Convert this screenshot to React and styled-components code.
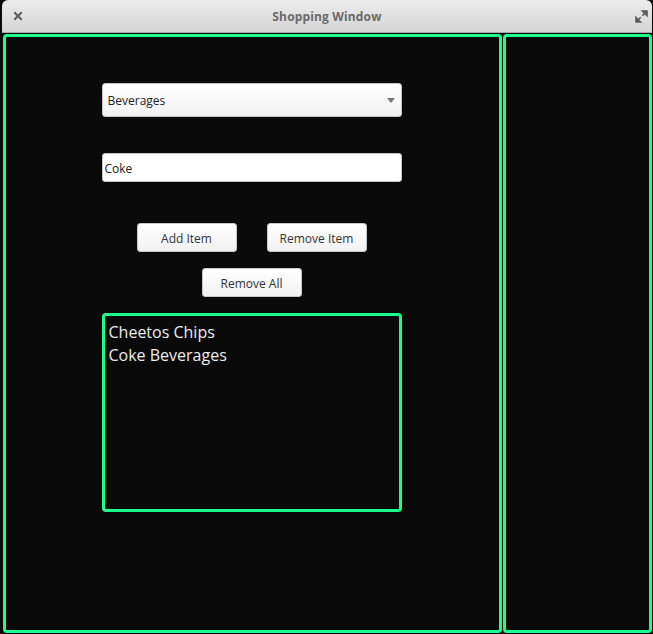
import React from 'react';
import styled, { createGlobalStyle } from 'styled-components';

const GlobalStyle = createGlobalStyle`
  html, body {
    margin: 0;
    padding: 0;
    background: #0a0a0a;
    font-family: "Open Sans", "Noto Sans", sans-serif;
  }
`;

const Window = styled.div`
  display: flex;
  flex-direction: column;
  width: 653px;
  height: 634px;
  background: #0a0a0a;
`;

const TitleBar = styled.div`
  position: relative;
  height: 32px;
  margin: 0 1px 0 2px;
  display: flex;
  align-items: center;
  justify-content: center;
  background: linear-gradient(#ececec, #d5d5d5);
  border-radius: 6px 6px 0 0;
  border-bottom: 1px solid #a8a8a8;
`;

const Title = styled.div`
  font-size: 12px;
  font-weight: 700;
  letter-spacing: 0.15px;
  color: #6a6a6a;
`;

const BarIcon = styled.div`
  position: absolute;
  top: 9px;
  ${(p) => (p.side === 'left' ? 'left: 9px;' : 'right: 4px;')}
  width: 14px;
  height: 14px;
  display: flex;
  align-items: center;
  justify-content: center;
`;

const Body = styled.div`
  flex: 1;
  display: flex;
  gap: 1px;
  padding: 1px 1px 1px 3px;
  min-height: 0;
`;

const Panel = styled.div`
  box-sizing: border-box;
  border: 3px solid #1aff8c;
  border-radius: 4px;
  ${(p) => (p.grow ? 'flex: 1;' : 'width: 149px;')}
  display: flex;
  flex-direction: column;
  align-items: center;
`;

const Form = styled.div`
  width: 300px;
  margin: 46px 2px 0 0;
  display: flex;
  flex-direction: column;
  align-items: center;
`;

const Select = styled.div`
  box-sizing: border-box;
  width: 100%;
  height: 34px;
  display: flex;
  align-items: center;
  justify-content: space-between;
  padding: 0 6px 0 5px;
  background: linear-gradient(#ffffff, #f2f2f2);
  border: 1px solid #c4c4c4;
  border-radius: 3px;
  font-size: 12px;
  color: #222;
`;

const Input = styled.input`
  box-sizing: border-box;
  width: 100%;
  height: 29px;
  margin-top: 36px;
  padding: 2px 2px 0;
  border: 1px solid #c4c4c4;
  border-radius: 3px;
  background: #fff;
  font-family: inherit;
  font-size: 12px;
  color: #222;
  outline: none;
`;

const ButtonRow = styled.div`
  display: flex;
  gap: 30px;
  margin-top: ${(p) => p.top}px;
`;

const Button = styled.button`
  box-sizing: border-box;
  width: 100px;
  height: 29px;
  padding: 2px 0 0;
  background: linear-gradient(#ffffff, #f1f1f1);
  border: 1px solid #c8c8c8;
  border-radius: 3px;
  font-family: inherit;
  font-size: 12px;
  color: #333;
`;

const ListBox = styled.div`
  box-sizing: border-box;
  width: 100%;
  height: 199px;
  margin-top: 16px;
  padding: 5px 4px;
  border: 3px solid #1aff8c;
  border-radius: 4px;
`;

const ListItem = styled.div`
  font-size: 16px;
  line-height: 23px;
  color: #ececec;
`;

const items = ['Cheetos Chips', 'Coke Beverages'];

export default function App() {
  return (
    <Window>
      <GlobalStyle />
      <TitleBar>
        <BarIcon side="left">
          <svg width="10" height="10" viewBox="0 0 10 10">
            <path d="M2 2 L8 8 M8 2 L2 8" stroke="#5c5c5c" strokeWidth="2" strokeLinecap="square" />
          </svg>
        </BarIcon>
        <Title>Shopping Window</Title>
        <BarIcon side="right">
          <svg width="13" height="13" viewBox="0 0 13 13">
            <path d="M7.5 1 H12 V5.5 Z M7.3 5.7 L10.2 2.8" fill="#5c5c5c" stroke="#5c5c5c" strokeWidth="1.6" />
            <path d="M1 7.5 V12 H5.5 Z M5.7 7.3 L2.8 10.2" fill="#5c5c5c" stroke="#5c5c5c" strokeWidth="1.6" />
          </svg>
        </BarIcon>
      </TitleBar>
      <Body>
        <Panel grow>
          <Form>
            <Select>
              <span>Beverages</span>
              <svg width="8" height="5" viewBox="0 0 8 5">
                <path d="M0 0 H8 L4 5 Z" fill="#777" />
              </svg>
            </Select>
            <Input defaultValue="Coke" />
            <ButtonRow top={41}>
              <Button>Add Item</Button>
              <Button>Remove Item</Button>
            </ButtonRow>
            <ButtonRow top={16}>
              <Button>Remove All</Button>
            </ButtonRow>
            <ListBox>
              {items.map((item) => (
                <ListItem key={item}>{item}</ListItem>
              ))}
            </ListBox>
          </Form>
        </Panel>
        <Panel />
      </Body>
    </Window>
  );
}
